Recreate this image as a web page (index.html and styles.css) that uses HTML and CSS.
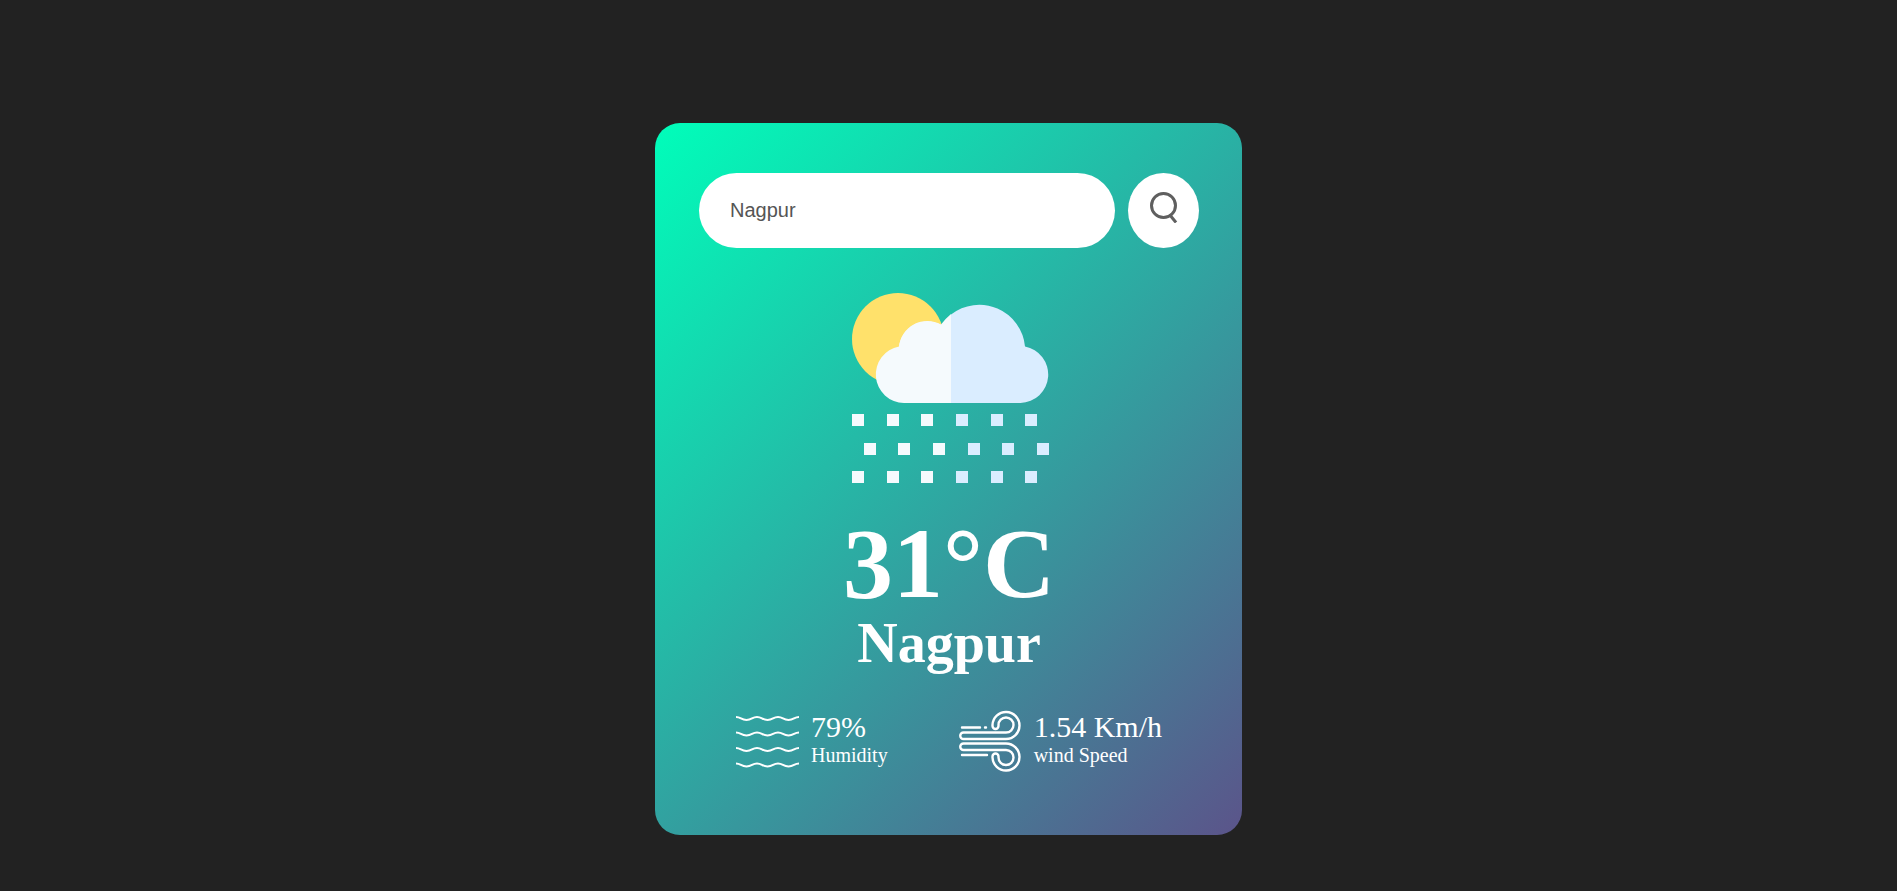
FILE: index.html
```
<!DOCTYPE html>
<html lang="en">
<head>
<meta charset="utf-8">
<title>Weather</title>
<link rel="stylesheet" href="styles.css">
</head>
<body>
<main class="card">
  <form class="search">
    <input class="search-input" type="text" value="Nagpur" placeholder="Enter city name" aria-label="City name" spellcheck="false">
    <button class="search-button" type="button" aria-label="Search">
      <svg class="search-icon" viewBox="0 0 32 32" aria-hidden="true">
        <circle cx="15.500" cy="14.500" r="12"/>
        <path d="M21.500 23.500L28 31.500"/>
      </svg>
    </button>
  </form>
  <section class="weather">
    <svg class="weather-icon" viewBox="0 0 212 212" role="img" aria-label="Drizzle">
      <circle class="sun" cx="55" cy="54" r="46"/>
      <path class="cloud-light" d="M61 118A28.500 28.500 0 0 1 56 61.500A28.500 28.500 0 0 1 98 39.500Q102 34 108 29V118Z"/>
      <path class="cloud-light" d="M56 62A28.500 28.500 0 0 1 98 40V90H56Z"/>
      <path class="cloud-dark" d="M108 29.500A46 46 0 0 1 182 61.500A28.500 28.500 0 0 1 177.500 118H108Z"/>
      <path class="cloud-light" d="M9 129h12v12h-12zM44 129h12v12h-12zM78 129h12v12h-12zM21 158h12v12h-12zM55 158h12v12h-12zM90 158h12v12h-12zM9 186h12v12h-12zM44 186h12v12h-12zM78 186h12v12h-12z"/>
      <path class="cloud-dark" d="M113 129h12v12h-12zM148 129h12v12h-12zM182 129h12v12h-12zM125 158h12v12h-12zM159 158h12v12h-12zM194 158h12v12h-12zM113 186h12v12h-12zM148 186h12v12h-12zM182 186h12v12h-12z"/>
    </svg>
    <h1 class="temp">31°C</h1>
    <h2 class="city">Nagpur</h2>
    <div class="details">
      <div class="detail">
        <svg class="detail-icon" viewBox="0 0 63 63" aria-hidden="true">
          <path d="M0 7C5 7 5 10 10.500 10S16 7 21 7S26 10 31.500 10S37 7 42 7S47 10 52.500 10S58 7 63 7"/>
          <path d="M0 22.500C5 22.500 5 25.500 10.500 25.500S16 22.500 21 22.500S26 25.500 31.500 25.500S37 22.500 42 22.500S47 25.500 52.500 25.500S58 22.500 63 22.500"/>
          <path d="M0 38C5 38 5 41 10.500 41S16 38 21 38S26 41 31.500 41S37 38 42 38S47 41 52.500 41S58 38 63 38"/>
          <path d="M0 53.500C5 53.500 5 56.500 10.500 56.500S16 53.500 21 53.500S26 56.500 31.500 56.500S37 53.500 42 53.500S47 56.500 52.500 56.500S58 53.500 63 53.500"/>
        </svg>
        <div>
          <p class="value">79%</p>
          <p class="label">Humidity</p>
        </div>
      </div>
      <div class="detail">
        <svg class="detail-icon detail-icon-wind" viewBox="0 0 63 63" aria-hidden="true">
          <path d="M3 17.500H21M26 17.500H27M3 45H28"/>
          <path d="M4.500 22.500H47A7.500 7.500 0 1 0 39.500 15V16A3 3 0 0 1 33.500 16V15A13.500 13.500 0 1 1 47 29H4.500A3.250 3.250 0 0 1 4.500 22.500Z"/>
          <path d="M4.500 40H47A7.500 7.500 0 1 1 39.500 47.500V46.500A3 3 0 0 0 33.500 46.500V47.500A13.500 13.500 0 1 0 47 33.500H4.500A3.250 3.250 0 0 0 4.500 40Z"/>
        </svg>
        <div>
          <p class="value">1.54 Km/h</p>
          <p class="label">wind Speed</p>
        </div>
      </div>
    </div>
  </section>
</main>
</body>
</html>
```

FILE: styles.css
```
* {
  box-sizing: border-box;
  margin: 0;
  padding: 0;
}

body {
  background: #222;
  font-family: "Liberation Serif", "Times New Roman", serif;
}

.card {
  width: 90%;
  max-width: 587px;
  margin: 123px auto 0;
  padding: 50px 43px 62px 44px;
  border-radius: 25px;
  background: linear-gradient(135deg, #00feba, #5b548a);
  color: #fff;
  text-align: center;
}

.search {
  display: flex;
  gap: 13px;
}

.search-input {
  flex: 1;
  min-width: 0;
  height: 75px;
  padding: 0 31px;
  border: 0;
  outline: 0;
  border-radius: 38px;
  background: #fff;
  color: #555;
  font: 20px "Liberation Sans", Arial, sans-serif;
}

.search-button {
  display: flex;
  justify-content: center;
  width: 71px;
  height: 75px;
  padding-top: 18px;
  border: 0;
  border-radius: 50%;
  background: #fff;
  cursor: pointer;
}

.search-icon {
  width: 32px;
  height: 32px;
  fill: none;
  stroke: #5f5f5f;
  stroke-width: 3;
}

.weather-icon {
  display: block;
  width: 212px;
  height: 212px;
  margin: 37px auto 0;
}

.sun {
  fill: #ffe16b;
}

.cloud-light {
  fill: #f5fafd;
}

.cloud-dark {
  fill: #daedff;
}

.temp {
  margin-top: 15px;
  font-size: 100px;
  font-weight: 700;
  line-height: 103px;
}

.city {
  font-size: 56px;
  font-weight: 700;
  line-height: 56px;
}

.details {
  display: flex;
  justify-content: space-between;
  margin-top: 39px;
  padding: 0 37px;
}

.detail {
  display: flex;
  align-items: flex-start;
  gap: 12px;
  text-align: left;
}

.detail-icon {
  width: 63px;
  height: 63px;
  fill: none;
  stroke: #fff;
  stroke-width: 2;
}

.detail-icon-wind {
  stroke-width: 2.400;
  stroke-linecap: round;
}

.value {
  font-size: 30px;
  line-height: 34px;
}

.label {
  font-size: 20px;
  line-height: 22px;
}
```
